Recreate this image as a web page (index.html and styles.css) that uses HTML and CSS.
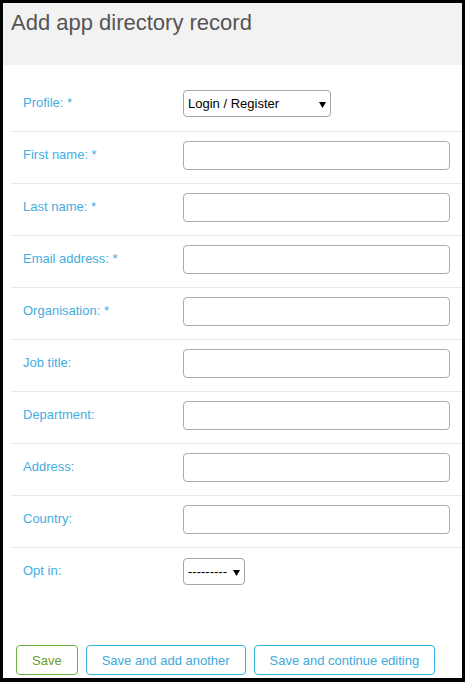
FILE: index.html
```html
<!DOCTYPE html>
<html>
<head>
<meta charset="utf-8">
<link rel="stylesheet" href="styles.css">
</head>
<body>
<div class="frame">
  <div class="header">
    <h1 class="title">Add app directory record</h1>
  </div>
  <form class="form">
    <div class="row">
      <label class="label">Profile: *</label>
      <select class="select select-profile"><option>Login / Register</option></select>
    </div>
    <div class="row">
      <label class="label">First name: *</label>
      <input class="input" type="text">
    </div>
    <div class="row">
      <label class="label">Last name: *</label>
      <input class="input" type="text">
    </div>
    <div class="row">
      <label class="label">Email address: *</label>
      <input class="input" type="text">
    </div>
    <div class="row">
      <label class="label">Organisation: *</label>
      <input class="input" type="text">
    </div>
    <div class="row">
      <label class="label">Job title:</label>
      <input class="input" type="text">
    </div>
    <div class="row">
      <label class="label">Department:</label>
      <input class="input" type="text">
    </div>
    <div class="row">
      <label class="label">Address:</label>
      <input class="input" type="text">
    </div>
    <div class="row">
      <label class="label">Country:</label>
      <input class="input" type="text">
    </div>
    <div class="row row-last">
      <label class="label">Opt in:</label>
      <select class="select select-opt"><option>---------</option></select>
    </div>
    <div class="actions">
      <button type="button" class="btn btn-save">Save</button>
      <button type="button" class="btn btn-alt">Save and add another</button>
      <button type="button" class="btn btn-alt">Save and continue editing</button>
    </div>
  </form>
</div>
</body>
</html>
```

FILE: styles.css
```css
html, body {
  margin: 0;
  padding: 0;
  background: #000;
}
.frame {
  box-sizing: border-box;
  width: 465px;
  height: 682px;
  border: 3px solid #000;
  border-bottom-width: 4px;
  background: #fff;
  overflow: hidden;
  font-family: "Liberation Sans", Arial, sans-serif;
}
.header {
  height: 62px;
  box-sizing: border-box;
  background: #f2f2f2;
  padding: 7px 8px 0;
}
.title {
  margin: 0;
  font-size: 22px;
  line-height: 26px;
  font-weight: normal;
  color: #555;
}
.form {
  padding: 15px 0 0 8px;
}
.row {
  box-sizing: border-box;
  height: 52px;
  padding: 9px 12px 0 0;
  border-bottom: 1px solid #e8e8e8;
  display: flex;
  align-items: flex-start;
}
.row-last {
  border-bottom: none;
}
.label {
  box-sizing: border-box;
  width: 172px;
  flex: none;
  padding: 6px 0 0 12px;
  font-size: 13px;
  line-height: 16px;
  color: #45ade0;
}
.input {
  box-sizing: border-box;
  flex: 1;
  height: 29px;
  margin: 0;
  border: 1px solid #ababab;
  border-radius: 4px;
  background: #fff;
  font-family: inherit;
  font-size: 13px;
}
.select {
  box-sizing: border-box;
  -webkit-appearance: none;
  appearance: none;
  height: 27px;
  margin: 1px 0 0;
  padding: 0 0 0 4px;
  border: 1px solid #a6a6a6;
  border-radius: 4px;
  font-family: "Liberation Sans", Arial, sans-serif;
  font-size: 13px;
  color: #000;
  background: #fff url("data:image/svg+xml,%3Csvg xmlns='http://www.w3.org/2000/svg' width='7' height='6'%3E%3Cpath d='M0 0H7L3.5 6Z' fill='%23000'/%3E%3C/svg%3E") no-repeat;
}
.select-profile {
  width: 148px;
  background-position: 135px 11px;
}
.select-opt {
  width: 62px;
  background-position: 49px 11px;
}
.actions {
  display: flex;
  gap: 8px;
  padding: 45px 0 0 5px;
}
.btn {
  box-sizing: border-box;
  height: 30px;
  padding: 0 15px;
  border-radius: 4px;
  background: #fff;
  font-family: "Liberation Sans", Arial, sans-serif;
  font-size: 13px;
  white-space: nowrap;
}
.btn-save {
  border: 1px solid #6cb33e;
  color: #6b9e28;
}
.btn-alt {
  border: 1px solid #3ab4df;
  color: #3ea9dd;
}
```
